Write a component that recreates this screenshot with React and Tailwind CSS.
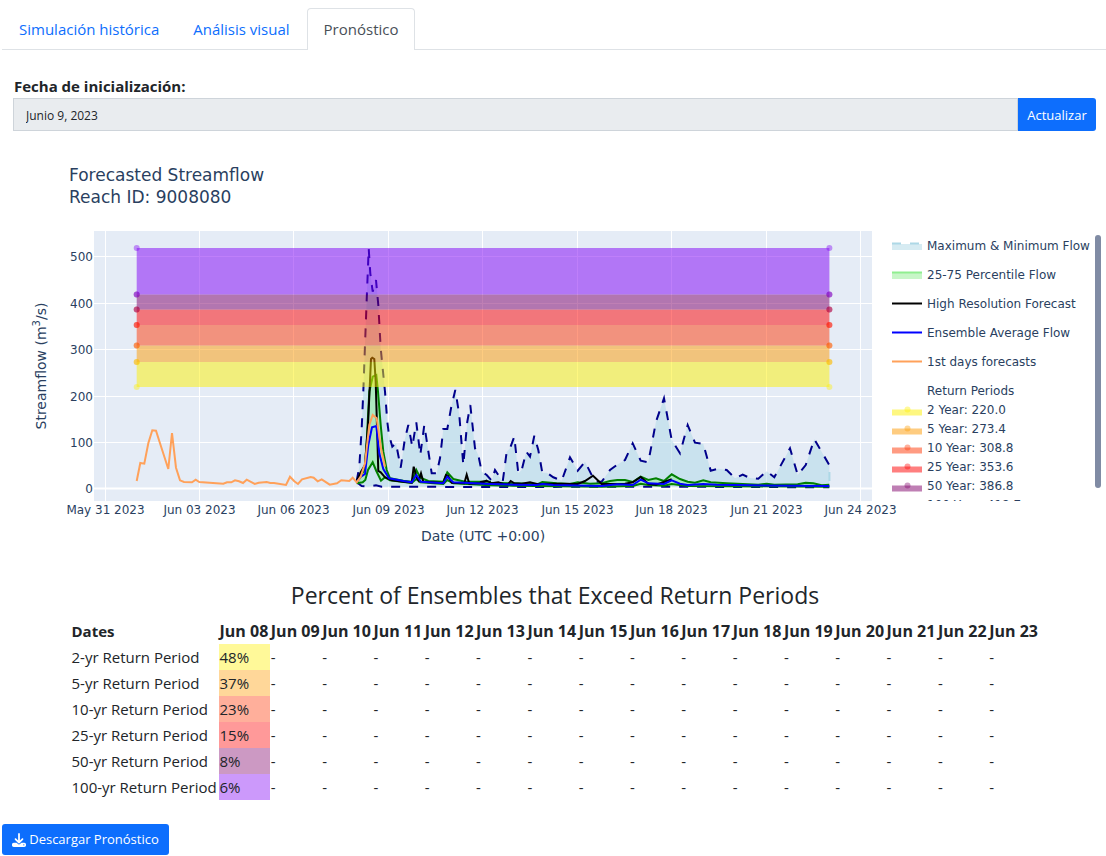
import React from "react";

const FONT = "font-['Open_Sans','Noto_Sans',sans-serif]";

// Series blocks hold offsets in thirds of a unit from the block's origin.
const block = (ox, oy, pts) => pts.map(([x, y]) => [ox + x / 3, oy + y / 3]);
const line = (pts) => pts.map(([x, y]) => `${x.toFixed(1)},${y.toFixed(1)}`).join(" ");

const maxFlow = [
  ...block(340, 225, [[50, 768], [58, 725], [65, 610], [70, 500], [75, 360], [81, 200], [86, 70], [91, 145], [98, 200], [108, 165], [115, 240], [122, 370], [135, 500], [142, 590], [147, 630], [157, 665], [168, 655], [182, 728], [194, 645], [205, 600], [217, 665], [229, 592], [241, 690], [253, 600], [275, 745], [290, 745], [300, 700], [310, 612], [322, 612], [334, 545], [346, 495], [358, 570], [370, 720], [382, 590], [391, 540], [405, 670], [415, 690]]),
  ...block(480, 370, [[5, 305], [20, 315], [35, 332], [45, 300], [68, 335], [80, 245], [90, 235], [103, 200], [115, 310], [125, 300], [139, 245], [150, 260], [163, 197], [175, 240], [187, 308], [200, 308], [220, 322], [245, 332], [270, 262], [293, 302], [315, 275], [345, 335], [365, 335], [390, 300], [410, 285], [435, 270], [458, 220], [482, 272], [505, 277], [528, 155], [552, 85]]),
  ...block(660, 370, [[35, 210], [60, 250], [83, 165], [105, 218], [130, 222], [152, 302], [175, 296], [200, 300], [225, 325], [248, 314], [270, 324], [295, 326], [320, 304], [343, 322], [390, 235], [413, 315], [437, 285], [463, 208], [508, 285]]),
];
const minFlow = [...block(340, 225, [[50, 772], [65, 783], [85, 785], [108, 781], [125, 785], [450, 786]]), ...block(660, 370, [[0, 350], [508, 352]])];
const p75 = [
  ...block(340, 225, [[50, 770], [62, 752], [74, 735], [80, 650], [88, 500], [98, 455], [109, 450], [114, 500], [122, 600], [130, 680], [140, 735], [150, 760], [190, 767], [215, 770], [229, 735], [241, 758], [265, 768], [310, 770], [322, 742], [340, 762], [375, 770], [450, 770]]),
  ...block(480, 370, [[30, 338], [100, 340], [175, 342], [187, 336], [230, 340], [270, 342], [293, 337], [330, 341], [365, 340], [390, 333], [412, 330], [435, 330], [458, 336], [482, 320], [505, 330], [528, 325], [552, 333], [575, 313]]),
  ...block(660, 370, [[60, 327], [83, 335], [105, 338], [130, 331], [152, 337], [200, 340], [295, 344], [320, 341], [343, 344], [413, 343], [437, 338], [460, 340], [485, 346], [508, 344]]),
];
const p25 = [
  ...block(340, 225, [[50, 775], [68, 772], [76, 765], [84, 735], [98, 712], [109, 738], [123, 767], [135, 757], [150, 766], [215, 774], [229, 762], [241, 772], [310, 777], [322, 765], [340, 775], [450, 781]]),
  ...block(480, 370, [[100, 347], [365, 350], [458, 348], [482, 341], [505, 345], [552, 347], [575, 342]]),
  ...block(660, 370, [[83, 348], [508, 350]]),
];
const highRes = [
  ...block(340, 225, [[50, 768], [62, 742], [75, 720], [84, 600], [93, 402], [97, 398], [103, 402], [107, 470], [115, 738], [122, 742], [135, 757], [155, 766], [190, 770], [215, 773], [221, 725], [231, 760], [236, 767], [243, 745], [250, 770], [310, 774], [318, 750], [324, 752], [335, 773], [373, 775], [380, 749], [388, 776], [425, 774], [440, 767]]),
  ...block(480, 370, [[0, 337], [20, 332], [35, 340], [55, 337], [70, 342], [84, 343], [92, 333], [103, 340], [125, 341], [150, 337], [170, 342], [240, 341], [293, 342], [315, 333], [339, 317], [365, 342], [435, 341], [458, 337], [482, 321], [505, 341], [528, 344], [552, 336], [575, 328]]),
];
const average = [
  ...block(340, 225, [[50, 771], [63, 755], [75, 747], [85, 660], [96, 607], [109, 603], [118, 685], [130, 732], [147, 760], [190, 768], [215, 772], [229, 750], [243, 770], [310, 775], [322, 755], [340, 772], [450, 777]]),
  ...block(480, 370, [[100, 344], [170, 345], [187, 342], [220, 345], [365, 348], [412, 343], [458, 345], [482, 329], [505, 340], [552, 342], [575, 331]]),
  ...block(660, 370, [[60, 341], [83, 345], [130, 342], [170, 344], [270, 346], [400, 347], [508, 348]]),
];
const firstDays = [
  ...block(90, 225, [[140, 768], [151, 714], [163, 716], [175, 655], [187, 616], [198, 617], [210, 655], [235, 732], [246, 624], [258, 728], [270, 766], [282, 771], [306, 772], [317, 764], [328, 771], [400, 776], [411, 772], [424, 772], [435, 766], [447, 769], [459, 774], [470, 764], [494, 777], [506, 773], [530, 771], [541, 774], [552, 774], [588, 780]]),
  ...block(280, 440, [[30, 110], [43, 124], [54, 132], [66, 118], [92, 111], [101, 113], [113, 124], [125, 118], [149, 134], [171, 130], [184, 121], [208, 123]]),
  ...block(340, 225, [[38, 758], [50, 772], [62, 755], [75, 715], [88, 600], [98, 570], [110, 580], [123, 670], [135, 725]]),
];

const returnPeriods = [
  { label: "2 Year: 220.0", color: "rgb(254,240,1)", top: 362, bottom: 387 },
  { label: "5 Year: 273.4", color: "rgb(253,154,1)", top: 345.5, bottom: 362 },
  { label: "10 Year: 308.8", color: "rgb(255,56,5)", top: 325, bottom: 345.5 },
  { label: "25 Year: 353.6", color: "rgb(255,0,0)", top: 309.5, bottom: 325 },
  { label: "50 Year: 386.8", color: "rgb(128,0,106)", top: 294.5, bottom: 309.5 },
  { label: "100 Year: 418.7", color: "rgb(128,0,246)", top: 248, bottom: 294.5 },
];
const xTicks = [
  [105.5, "May 31 2023"], [199.5, "Jun 03 2023"], [293.5, "Jun 06 2023"], [388.5, "Jun 09 2023"], [482.5, "Jun 12 2023"],
  [577.5, "Jun 15 2023"], [671.5, "Jun 18 2023"], [766.5, "Jun 21 2023"], [860.5, "Jun 24 2023"],
];
const yTicks = [[488.5, 0], [442.5, 100], [396.5, 200], [349.5, 300], [303.5, 400], [256.5, 500]];
const lineLegend = [
  ["High Resolution Forecast", "black", 303],
  ["Ensemble Average Flow", "blue", 332],
  ["1st days forecasts", "#ffa15a", 361],
];

function StreamflowChart() {
  return (
    <svg viewBox="0 151 1106 410" className="block w-full font-['DejaVu_Sans',Verdana,sans-serif]" role="img" aria-label="Forecasted Streamflow" fill="#2a3f5f">
      <defs>
        <clipPath id="legend-clip"><rect x="884" y="231" width="210" height="270" /></clipPath>
      </defs>
      <text fontSize="17" x="69" y="181">Forecasted Streamflow</text>
      <text fontSize="17" x="69" y="203">Reach ID: 9008080</text>
      <rect x="94" y="231" width="778" height="270" fill="#e5ecf6" />
      <g stroke="white">
        {xTicks.map(([x]) => <path key={x} d={`M${x} 231V501`} />)}
        {yTicks.map(([y, v]) => <path key={v} d={`M94 ${y}H872`} strokeWidth={v === 0 ? 2 : 1} />)}
      </g>
      <polygon points={line([...maxFlow, ...[...minFlow].reverse()])} fill="lightblue" fillOpacity="0.5" />
      <path d="M829.4 472V487" stroke="lightblue" strokeWidth="2" strokeDasharray="9 9" />
      <polygon points={line([...p75, ...[...p25].reverse()])} fill="lightgreen" fillOpacity="0.5" />
      <g fill="none" strokeWidth="2">
        <polyline points={line(maxFlow)} stroke="darkblue" strokeDasharray="9 9" />
        <polyline points={line(minFlow)} stroke="darkblue" strokeDasharray="9 9" />
        <polyline points={line(p75)} stroke="green" />
        <polyline points={line(p25)} stroke="green" />
        <polyline points={line(highRes)} stroke="black" />
        <polyline points={line(average)} stroke="blue" />
        <polyline points={line(firstDays)} stroke="#ffa15a" />
      </g>
      {returnPeriods.map((p) => (
        <rect key={p.label} x="136.7" y={p.top} width="692.7" height={p.bottom - p.top} fill={p.color} fillOpacity="0.5" />
      ))}
      {returnPeriods.map((p) => (
        <g key={p.label} fill={p.color} fillOpacity="0.4">
          {[136.7, 829.4].map((x) => [p.top, p.bottom].map((y) => <circle key={`${x}-${y}`} cx={x} cy={y} r="3" />))}
        </g>
      ))}
      <g fontSize="12" textAnchor="middle">
        {xTicks.map(([x, t]) => <text key={t} x={x} y="514">{t}</text>)}
      </g>
      <g fontSize="12" textAnchor="end">
        {yTicks.map(([y, v]) => <text key={v} x="93" y={y + 4.5}>{v}</text>)}
      </g>
      <text fontSize="14" x="483" y="541" textAnchor="middle">Date (UTC +0:00)</text>
      <text fontSize="14" transform="translate(46 366) rotate(-90)" textAnchor="middle">
        Streamflow (m<tspan fontSize="10" dy="-6">3</tspan><tspan dy="6">/s)</tspan>
      </text>
      <g clipPath="url(#legend-clip)" fontSize="12">
        <rect x="892" y="244" width="30" height="6" fill="lightblue" fillOpacity="0.5" />
        <path d="M892 243.500H922" stroke="lightblue" strokeWidth="2" strokeDasharray="9 9" />
        <text x="927" y="250">Maximum &amp; Minimum Flow</text>
        <rect x="892" y="273" width="30" height="6" fill="lightgreen" fillOpacity="0.5" />
        <path d="M892 272.500H922" stroke="lightgreen" strokeWidth="2" />
        <text x="927" y="279">25-75 Percentile Flow</text>
        {lineLegend.map(([t, c, y]) => (
          <g key={t}>
            <path d={`M892 ${y + 0.5}H922`} stroke={c} strokeWidth="2" />
            <text x="927" y={y + 5}>{t}</text>
          </g>
        ))}
        <text x="927" y="395">Return Periods</text>
        {returnPeriods.map((p, i) => (
          <g key={p.label}>
            <rect x="892" y={409.5 + i * 19} width="30" height="6" fill={p.color} fillOpacity="0.5" />
            <circle cx="907.5" cy={409.5 + i * 19} r="3" fill={p.color} fillOpacity="0.4" />
            <text x="927" y={414 + i * 19}>{p.label}</text>
          </g>
        ))}
      </g>
      <rect x="1095" y="235" width="6" height="253" rx="3" fill="#808ba4" />
    </svg>
  );
}

const days = Array.from({ length: 16 }, (_, i) => `Jun ${String(i + 8).padStart(2, "0")}`);
const rows = [
  ["2-yr Return Period", "48%", "bg-[#fff999]"],
  ["5-yr Return Period", "37%", "bg-[#ffd799]"],
  ["10-yr Return Period", "23%", "bg-[#ffaf9b]"],
  ["25-yr Return Period", "15%", "bg-[#ff9999]"],
  ["50-yr Return Period", "8%", "bg-[#cc99c3]"],
  ["100-yr Return Period", "6%", "bg-[#cc99fb]"],
];

export default function App() {
  return (
    <main className={`bg-white pt-2 text-[15px] text-[#212529] ${FONT}`}>
      <nav className="ml-0.5 flex h-[42px] border-b border-[#dee2e6]">
        <a href="#historica" className="-mb-px flex items-center border border-b-0 border-transparent px-4 text-[#0d6efd]">Simulación histórica</a>
        <a href="#visual" className="-mb-px flex items-center border border-b-0 border-transparent px-4 text-[#0d6efd]">Análisis visual</a>
        <a href="#pronostico" aria-current="page" className="-mb-px flex items-center rounded-t border border-b-0 border-[#dee2e6] bg-white px-4 text-[#495057]">Pronóstico</a>
      </nav>
      <form className="pt-6 pr-2.5 pl-[13px]" onSubmit={(e) => e.preventDefault()}>
        <label htmlFor="fecha" className="block pl-px leading-6 font-bold">Fecha de inicialización:</label>
        <div className="flex h-[33px]">
          <input id="fecha" readOnly value="Junio 9, 2023" className="min-w-0 flex-1 border border-[#ced4da] bg-[#e9ecef] px-3 pt-0.5 text-xs text-[#212529]" />
          <button type="submit" className="w-[78px] rounded-r-[3px] bg-[#0d6efd] pt-0.5 text-[13px] text-white">Actualizar</button>
        </div>
      </form>
      <section className="pt-5">
        <StreamflowChart />
      </section>
      <section className="pt-[18px] pl-1">
        <h2 className="text-center text-[23px] leading-8 font-medium">Percent of Ensembles that Exceed Return Periods</h2>
        <table className="mx-auto mt-[7px] w-[969px] table-fixed border-collapse text-left leading-6">
          <colgroup>
            <col className="w-[148px]" />
            {days.map((d) => <col key={d} />)}
          </colgroup>
          <thead>
            <tr>
              <th className="p-px">Dates</th>
              {days.map((d) => <th key={d} className="p-px text-base leading-6 whitespace-nowrap">{d}</th>)}
            </tr>
          </thead>
          <tbody>
            {rows.map(([name, pct, color]) => (
              <tr key={name}>
                <td className="p-px whitespace-nowrap">{name}</td>
                <td className={`p-px ${color}`}>{pct}</td>
                {days.slice(1).map((d) => <td key={d} className="p-px">-</td>)}
              </tr>
            ))}
          </tbody>
        </table>
      </section>
      <button type="button" className="mt-6 ml-0.5 flex h-[31px] w-[167px] items-center justify-center gap-[3px] rounded-[3px] bg-[#0d6efd] text-[13px] whitespace-nowrap text-white">
        <svg viewBox="0 0 512 512" className="h-3.5 w-3.5" fill="currentColor" aria-hidden="true">
          <path d="M288 32c0-17.700-14.300-32-32-32s-32 14.300-32 32V274.700l-73.400-73.400c-12.500-12.500-32.800-12.500-45.300 0s-12.500 32.800 0 45.300l128 128c12.500 12.500 32.800 12.500 45.300 0l128-128c12.500-12.500 12.500-32.800 0-45.300s-32.800-12.500-45.300 0L288 274.700V32zM64 352c-35.300 0-64 28.700-64 64v32c0 35.300 28.700 64 64 64H448c35.300 0 64-28.700 64-64V416c0-35.300-28.700-64-64-64H346.500l-45.300 45.300c-25 25-65.500 25-90.500 0L165.500 352H64zm368 56a24 24 0 1 1 0 48 24 24 0 1 1 0-48z" />
        </svg>
        Descargar Pronóstico
      </button>
    </main>
  );
}
